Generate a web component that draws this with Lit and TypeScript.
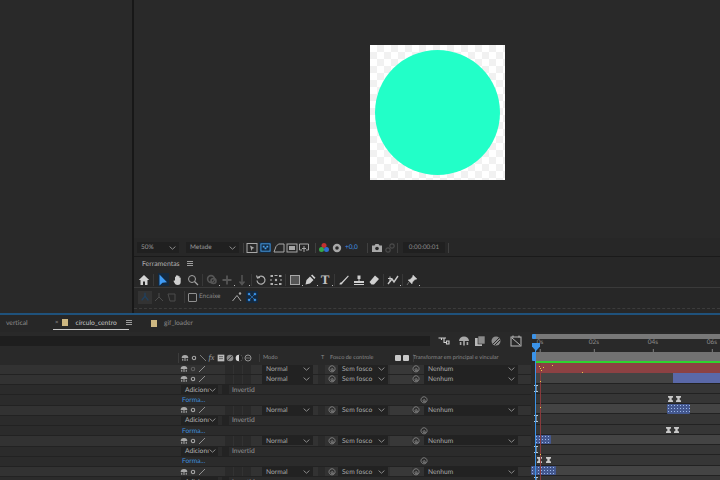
import { LitElement, html, css, svg } from "lit";
import { customElement } from "lit/decorators.js";

const ic = (content: unknown, w = 12, h = 12, cls = "") =>
  html`<svg class="ic ${cls}" width=${w} height=${h} viewBox="0 0 12 12">${content}</svg>`;

const solo = svg`<path d="M1 6a5 4.600 0 0 1 10 0zM5.200 6h1.600v4.500H5.200zM1.800 7h1.600v3H1.800zM8.600 7h1.600v3H8.600z" fill="currentColor"/>`;
const gear = svg`<circle cx="6" cy="6" r="3.400" fill="none" stroke="currentColor" stroke-width="2.200"/>`;
const slash = svg`<path d="M1.500 10.500 10.500 1.500" stroke="currentColor" stroke-width="1.200" fill="none"/>`;
const spiral = svg`<path d="M9.600 8.600A4.600 4.600 0 1 1 10.600 5.500c.2 2-1 3-2 3-1.300 0-1.100-1.300-1-2.600-.8-.7-3.200-.4-3.200 1.300 0 1.700 2.500 1.700 3.200.6" fill="none" stroke="currentColor" stroke-width="1"/>`;
const chevron = html`<svg class="chev" width="7" height="4" viewBox="0 0 7 4"><path d="M.6.6 3.500 3.200 6.400.6" fill="none" stroke="currentColor" stroke-width="1"/></svg>`;

type Row = { kind: "layer"; sw: number } | { kind: "add" } | { kind: "shape" };

const rows: Row[] = [
  { kind: "layer", sw: 0 },
  { kind: "layer", sw: 1 },
  { kind: "add" },
  { kind: "shape" },
  { kind: "layer", sw: 1 },
  { kind: "add" },
  { kind: "shape" },
  { kind: "layer", sw: 1 },
  { kind: "add" },
  { kind: "shape" },
  { kind: "layer", sw: 1 },
  { kind: "add" },
];

const RH = 10.25;
const clips = [
  { r: 0, l: 5, w: 184, c: "red" },
  { r: 1, l: 142, w: 47, c: "blue" },
  { r: 4, l: 136, w: 23, c: "clip" },
  { r: 7, l: 4, w: 16, c: "clip" },
  { r: 10, l: 0, w: 25, c: "clip" },
];
const markers = [
  { r: 3, l: 137 },
  { r: 3, l: 145 },
  { r: 6, l: 135 },
  { r: 6, l: 143 },
  { r: 9, l: 6 },
  { r: 9, l: 15 },
];
const bars = [2, 5, 8, 11];
const dots = [
  [8, 3], [9, 5], [12, 4], [21, 2], [9, 18], [51, 9], [9, 44], [10, 7], [9, 91],
];

const toolbar = [
  svg`<path d="M6 1 .8 6H2.500v5h2.500V7.500h2V11h2.500V6h1.700z" fill="#d4d4d4"/>`,
  "sep",
  "arrow",
  svg`<path d="M3 6V3.200c0-.9 1-.9 1 0V2c0-.9 1.200-.9 1.200 0v-.2c0-.8 1.200-.8 1.200 0V2.600c0-.8 1.200-.8 1.200 0V4c0-.7 1.100-.7 1.100 0v4c0 2-1 3-3 3-2.200 0-2.800-1-4-3.500-.4-.8.500-1.300 1-.7z" fill="#cfcfcf"/>`,
  svg`<circle cx="5" cy="5" r="3.500" fill="none" stroke="#a4a4a4"/><path d="M7.500 7.500 11 11" stroke="#a4a4a4" stroke-width="1.200"/>`,
  "sep",
  svg`<circle cx="5" cy="5" r="3.400" fill="none" stroke="#565656" stroke-width="1.600"/><circle cx="7.500" cy="7" r="2.500" fill="none" stroke="#565656" stroke-width="1.600"/>`,
  svg`<path d="M6 1.500v9M1.500 6h9" stroke="#565656" stroke-width="1.800"/>`,
  svg`<path d="M6 1v9M3.500 7.500 6 10.500 8.500 7.500" stroke="#565656" fill="none" stroke-width="1.500"/>`,
  "sep",
  svg`<path d="M3 3.500A4 4 0 1 1 2 6.500M1.500 1.500l1 2.500 2.500-.5" fill="none" stroke="#b0b0b0" stroke-width="1.200"/>`,
  svg`<path d="M.5 1h2.500v2H.5zM4.500 1h3v1h-3zM9 1h2.500v2H9zM.5 5h1v2h-1zM10.500 5h1v2h-1zM.5 9h2.500v2H.5zM4.500 10h3v1h-3zM9 9h2.500v2H9z" fill="#b0b0b0"/><circle cx="6" cy="6" r="1.200" fill="#b0b0b0"/>`,
  "sep",
  svg`<rect x="1.500" y="1.500" width="9" height="9" fill="#555" stroke="#a8a8a8"/>`,
  svg`<path d="M1.500 10.500 2.500 6l3.500-3.500 3.500 3.500L6 9.500zM7 1.500 8.200.5l3.300 3.300-1.200 1.200z" fill="#cfcfcf"/>`,
  "T",
  "sep",
  svg`<path d="M1.500 10.500c0-1.500 1-2.200 2-2.200L10 1.500l.8.800-6.300 7c0 1-1.500 1.500-3 1.200z" fill="#d0d0d0"/>`,
  svg`<path d="M4.500 1.500h3v3.500h-1V7H11v2H1V7h4.500V5h-1zM1 10h10v1H1z" fill="#cfcfcf"/>`,
  svg`<path d="M7 1.500 11 5 6 10.500H3.500L1.500 8z" fill="#d0d0d0"/>`,
  "sep",
  svg`<path d="M1 10 5 5 7 8l4-6" fill="none" stroke="#c8c8c8" stroke-width="1.400"/><path d="M3 2.500v5M1 4.500h4" stroke="#c8c8c8"/>`,
  "sep",
  svg`<path d="M7 1l4 4-2 .5-2.500 2.500L6 10 2 6l2-.5L6.500 3zM3 8l-2 3" fill="#cfcfcf" stroke="#cfcfcf" stroke-width=".4"/>`,
];
const fly = new Set([6, 7, 8, 13, 14, 15, 21, 23]);

@customElement("app-root")
export class AppRoot extends LitElement {
  static styles = css`
    :host {
      display: block;
      width: 720px;
      height: 480px;
      overflow: hidden;
      background: #292929;
      color: #a8a8a8;
      font-family: Lato, "Noto Sans", sans-serif;
      font-size: 6.700px;
      line-height: 10px;
      text-rendering: geometricPrecision;
    }
    .ic { display: block; flex: none; color: #a8a8a8; }
    .chev { color: #8b8b8b; flex: none; }
    .upper { height: 313px; display: flex; }
    .left { width: 132px; flex: none; background: #292929; border-right: 2px solid #171717; }
    .right { width: 586px; display: flex; flex-direction: column; }
    .viewer { height: 238px; flex: none; background: #292929; padding: 45px 0 0 236px; box-sizing: border-box; }
    .comp {
      width: 135px; height: 135px;
      background-color: #fff;
      background-image: conic-gradient(#f1f1f1 25%, #fff 0 50%, #f1f1f1 0 75%, #fff 0);
      background-size: 14px 14px;
      display: flex; align-items: center; justify-content: center;
    }
    .circle { width: 125px; height: 125px; border-radius: 50%; background: #22ffc8; }

    .vbar { height: 19px; flex: none; display: flex; align-items: center; padding: 1px 0 0 3px; border-bottom: 1px solid #1a1a1a; box-sizing: border-box; background: #272727; }
    .vsel { height: 11px; background: #202020; display: flex; align-items: center; justify-content: space-between; box-sizing: border-box; padding: 0 3px 0 4px; color: #9a9a9a; flex: none; font-size: 6.400px; }
    .s50 { width: 42px; }
    .smet { width: 53px; margin-left: 7px; }
    .sep { width: 1px; height: 10px; background: #404040; flex: none; }
    .ml1 { margin-left: 1px; } .ml2 { margin-left: 2px; } .ml3 { margin-left: 3px; }
    .ml4 { margin-left: 4px; } .ml5 { margin-left: 5px; } .ml9 { margin-left: 9px; }
    .hl { background: #14293f; width: 12px; height: 11px; display: flex; align-items: center; justify-content: center; flex: none; }
    .plus { color: #3f8fe0; width: 13px; flex: none; font-size: 6.500px; }
    .timebox { background: #202020; height: 11px; width: 42px; display: flex; align-items: center; justify-content: center; color: #8a8a8a; flex: none; font-size: 6.300px; }

    .tools { flex: 1; display: flex; flex-direction: column; background: #272727; }
    .tools-title { height: 13px; display: flex; align-items: center; padding-left: 8px; color: #b0b0b0; font-size: 6.900px; flex: none; }
    .burger { width: 6px; height: 5px; border-top: 1px solid #9c9c9c; border-bottom: 1px solid #9c9c9c; position: relative; flex: none; box-sizing: border-box; }
    .burger::after { content: ""; position: absolute; left: 0; right: 0; top: 1px; height: 1px; background: #9c9c9c; }
    .tools-title .burger { margin-left: 7px; }
    .tool-row { display: flex; align-items: center; height: 18px; padding-left: 2.500px; flex: none; box-sizing: border-box; }
    .tool-row.first { border-bottom: 1px solid #3a3a3a; padding-top: 2px; }
    .slot { width: 15px; height: 13px; display: flex; align-items: center; justify-content: center; flex: none; position: relative; }
    .slot.f::after { content: ""; position: absolute; right: 0; bottom: 0; width: 1px; height: 1px; background: #bdbdbd; }
    .slot.on { background: #14293f; width: 11px; margin: 0 2px; }
    .t-glyph { font: 600 13px/13px "Liberation Serif", serif; color: #c2c2c2; }
    .t-sep { width: 1px; height: 12px; background: #383838; flex: none; margin: 0 1.500px; }
    .snap-off { background: #333; width: 14px; height: 13px; display: flex; align-items: center; justify-content: center; flex: none; margin-left: -1px; }
    .r2-a { margin-left: 1px; }
    .r2-sep { margin-left: 6px; }
    .check { width: 7px; height: 7px; border: 1px solid #909090; border-radius: 1px; flex: none; margin-left: 2px; }
    .encaixe { color: #8a8a8a; width: 27px; margin-left: 2px; flex: none; font-size: 6.400px; }
    .r2-b { margin-left: 5px; }
    .snap { background: #14293f; width: 12px; height: 12px; display: flex; align-items: center; justify-content: center; flex: none; margin-left: 3px; }
    .dash { margin-top: 2px; border-top: 1px dashed #3c3c3c; }

    .blue-line { height: 2px; background: #1f527c; }
    .tabs { height: 17px; display: flex; align-items: flex-start; background: #272727; color: #8f8f8f; box-sizing: border-box; }
    .tab { display: flex; align-items: center; height: 14px; margin-top: 1px; box-sizing: border-box; flex: none; }
    .t-vert { padding-left: 6px; width: 53px; }
    .t-act { width: 76px; color: #c4c4c4; border-bottom: 1px solid #c8c8c8; padding-left: 2px; }
    .t-act .swatch { margin-left: 4px; margin-right: 7px; }
    .t-act .burger { margin-left: 9px; }
    .t-gif { margin-left: 22px; color: #8a8a8a; }
    .t-gif .swatch { margin-right: 7px; }
    .swatch { width: 6px; height: 7px; background: #cdb781; flex: none; }
    .x { font-size: 6px; color: #999; }

    .timeline { height: 148px; display: grid; grid-template-columns: 531px 189px; background: #292929; }
    .pane { display: flex; flex-direction: column; min-width: 0; }
    .top-ctl { height: 20px; flex: none; display: flex; background: #292929; padding-top: 4px; box-sizing: border-box; }
    .search { width: 430px; height: 10px; background: #1e1e1e; flex: none; }
    .ctl { width: 12px; height: 12px; flex: none; margin-left: 4px; margin-top: -1px; }
    .ctl.wide { margin-left: 8px; }
    .head { height: 12.500px; padding-bottom: 1.500px; box-sizing: border-box; flex: none; display: flex; align-items: center; color: #8a8a8a; font-size: 5.600px; }
    .sw-icons { display: flex; align-items: center; flex: none; margin-left: 178px; width: 81px; border-left: 1px solid #3c3c3c; padding-left: 1px; box-sizing: border-box; }
    .sw { width: 9px; display: flex; justify-content: center; flex: none; }
    .fx { font: italic 8px/10px "Liberation Serif", serif; color: #a0a0a0; }
    .h-bar { width: 1px; height: 8px; background: #3c3c3c; flex: none; }
    .h-mode { margin-left: 3px; width: 58px; flex: none; }
    .h-t { width: 9px; flex: none; }
    .h-foc { width: 65px; flex: none; }
    .tiny { width: 6px; height: 6px; background: #c8c8c8; flex: none; border-radius: 1px; margin-right: 2px; }
    .h-bar2 { width: 1px; height: 8px; background: #3c3c3c; margin: 0 2px; flex: none; }
    .h-tr { flex: none; white-space: nowrap; margin-left: -3px; }

    .row { height: 10.250px; flex: none; display: flex; align-items: center; box-sizing: border-box; border-bottom: 1px solid #222; background: #2b2b2b; white-space: nowrap; }
    .row.layer { background: #323232; }
    .switches { margin-left: 180px; display: flex; width: 82px; flex: none; height: 100%; align-items: center; }
    .sw-gear { margin-left: 2px; }
    .sw-slash { margin-left: 2px; }
    .sw-gear.off { color: #5e5e5e; }
    .blank { width: 8px; height: 100%; background: #2a2a2a; margin-right: 1px; flex: none; }
    .blank.first { margin-left: 19px; }
    .sel { display: flex; align-items: center; justify-content: space-between; box-sizing: border-box; padding: 0 3px 0 4px; height: 9px; background: #222; color: #a8a8a8; flex: none; }
    .mode { width: 51px; }
    .cell { width: 7px; height: 100%; background: #2a2a2a; margin-left: 5px; flex: none; }
    .sp-cell { width: 8px; margin-left: 3px; flex: none; }
    .sp-cell .ic, .orb { color: #a0a0a0; }
    .foco { width: 50px; margin-left: 2px; }
    .hatch { width: 22px; height: 100%; margin-left: 2px; flex: none; background: #383838; }
    .sp2 { flex: none; }
    .parent { width: 94px; margin-left: 4px; }
    .add-sel { margin-left: 181px; width: 37px; background: #222; color: #b4b4b4; padding: 0 2px 0 4px; overflow: hidden; }
    .inv-box { width: 7px; height: 9px; background: #232323; margin: 0 3px 0 4px; flex: none; }
    .inv { color: #969696; flex: none; }
    .forma { margin-left: 182px; color: #3d8fdf; width: 238px; flex: none; }
    .orb { flex: none; }
    .tl-right { position: relative; overflow: hidden; }
    .nav { height: 5px; margin: 2px 0 0 4px; flex: none; background: #787878; }
    .ruler { height: 13px; flex: none; position: relative; color: #8b8b8b; font-size: 6.500px; }
    .tk { position: absolute; top: -1px; transform: translateX(-50%); }
    .tk::after { content: ""; position: absolute; left: 50%; top: 11px; width: 1px; height: 3px; background: #808080; }
    .work { height: 9px; margin-left: 4px; background: #727272; flex: none; }
    .green { height: 2px; flex: none; background: #2fd32f; margin-left: 5px; }
    .tracks { flex: 1; position: relative; min-height: 0; background: #2b2b2b; }
    .trk { height: 10.250px; box-sizing: border-box; border-bottom: 1px solid #222; background: #363636; margin-left: 5px; }
    .trk.lay { background: #444; }
    .c { position: absolute; height: 9.500px; }
    .red { background: #8c4143; }
    .blue { background: #5a68a8; }
    .clip { background-color: #44588f; background-image: radial-gradient(#9db8ea .6px, transparent .8px); background-size: 3px 3px; border-radius: 1px; }
    .mk { position: absolute; width: 5px; height: 6px; color: #c8c8c8; }
    .bar { position: absolute; width: 4px; height: 7px; left: 3px; color: #b4cad8; }
    .dot { position: absolute; width: 1px; height: 1px; background: #ecc84a; }
    .ph { position: absolute; top: -20px; bottom: 0; left: 4px; width: 1px; background: #3b93e8; }
    .ph2 { position: absolute; top: 0; bottom: 0; left: 8.500px; width: 1.500px; background: #8a3a3c; }
    .nub { position: absolute; left: 1px; width: 4px; background: #3b93e8; border-radius: 1px; }
    .nub.a { top: 2px; height: 5px; }
    .nub.b { top: 20px; height: 9px; }
    .head-m { position: absolute; left: 1px; top: 11px; }
  `;

  private renderRow(r: Row) {
    if (r.kind === "layer") {
      return html`<div class="row layer">
        <div class="switches">
          ${ic(solo, 8, 8)}
          ${ic(gear, 6, 6, r.sw ? "sw-gear" : "sw-gear off")}
          ${ic(slash, 8, 8, "sw-slash")}
          <span class="blank first"></span><span class="blank"></span><span class="blank"></span>
        </div>
        <div class="sel mode">Normal ${chevron}</div>
        <div class="cell"></div>
        <div class="sp-cell">${ic(spiral, 8, 8)}</div>
        <div class="sel foco">Sem fosco ${chevron}</div>
        <div class="hatch"></div>
        ${ic(spiral, 8, 8, "orb sp2")}
        <div class="sel parent">Nenhum ${chevron}</div>
      </div>`;
    }
    if (r.kind === "add") {
      return html`<div class="row">
        <div class="sel add-sel">Adicionı ${chevron}</div>
        <div class="inv-box"></div>
        <div class="inv">Invertid</div>
      </div>`;
    }
    return html`<div class="row">
      <div class="forma">Forma...</div>
      ${ic(spiral, 8, 8, "orb")}
    </div>`;
  }

  private renderTool(t: unknown, i: number) {
    if (t === "sep") return html`<span class="t-sep"></span>`;
    if (t === "arrow")
      return html`<span class="slot on">${ic(svg`<path d="M2.500 .5v11l3-2.800 4.500-.4z" fill="#3f9bf5"/>`)}</span>`;
    const f = fly.has(i) ? "slot f" : "slot";
    if (t === "T") return html`<span class="${f}"><span class="t-glyph">T</span></span>`;
    return html`<span class="${f}">${ic(t)}</span>`;
  }

  render() {
    return html`
      <div class="upper">
        <div class="left"></div>
        <div class="right">
          <div class="viewer"><div class="comp"><div class="circle"></div></div></div>
          <div class="vbar">
            <div class="vsel s50">50% ${chevron}</div>
            <div class="vsel smet">Metade ${chevron}</div>
            <span class="sep ml4"></span>
            ${ic(svg`<rect x="1" y="1.500" width="10" height="9" fill="none" stroke="currentColor"/><path d="M4 3.500l4.500 2.500-2 .5-1 2.500z" fill="currentColor"/>`, 12, 12, "ml2")}
            <span class="hl ml1">${ic(svg`<rect x="1" y="2" width="10" height="8" fill="none" stroke="#4aa3ee"/><path d="M3 4h2v2H3zM7 4h2v2H7zM5 6h2v2H5z" fill="#4aa3ee"/>`, 11, 11)}</span>
            ${ic(svg`<path d="M1 10h10V2H5.500L3 4.500 1 10z" fill="none" stroke="currentColor"/>`, 12, 12, "ml2")}
            ${ic(svg`<rect x="1" y="2" width="10" height="8" fill="none" stroke="currentColor"/><rect x="3" y="4" width="6" height="4" fill="currentColor"/>`, 12, 12, "ml1")}
            ${ic(svg`<path d="M4 8H1.500V2h9v6H8M6 4v6M4 6.500h4" fill="none" stroke="currentColor"/>`)}
            <span class="sep ml5"></span>
            ${ic(svg`<circle cx="6" cy="3.500" r="2.500" fill="#c23030"/><circle cx="3.500" cy="7.500" r="2.500" fill="#35a84a"/><circle cx="8.500" cy="7.500" r="2.500" fill="#2f6fd0"/>`, 12, 12, "ml2")}
            ${ic(svg`<circle cx="6" cy="6" r="3" fill="none" stroke="currentColor" stroke-width="2.400"/>`, 12, 12, "ml1")}
            <span class="plus ml2">+0,0</span>
            <span class="sep ml9"></span>
            ${ic(svg`<path d="M1 3.500h2.500l1-1.500h3l1 1.500H11v6.500H1z" fill="currentColor"/><circle cx="6" cy="6.500" r="1.800" fill="#272727"/>`, 12, 12, "ml3")}
            ${ic(svg`<circle cx="4" cy="8" r="2.200" fill="none" stroke="#4a4a4a" stroke-width="1.200"/><circle cx="8" cy="4" r="2.200" fill="none" stroke="#4a4a4a" stroke-width="1.200"/>`, 12, 12, "ml1")}
            <span class="sep ml1"></span>
            <div class="timebox ml5">0:00:00:01</div>
            <span class="sep ml3"></span>
          </div>
          <div class="tools">
            <div class="tools-title">Ferramentas<span class="burger"></span></div>
            <div class="tool-row first">${toolbar.map((t, i) => this.renderTool(t, i))}</div>
            <div class="tool-row">
              <span class="snap-off r2-a">${ic(svg`<path d="M6 1v4L2 10M6 5l4 5" stroke="#1f4160" stroke-width="1.500" fill="none"/>`, 10, 10)}</span>
              ${ic(svg`<path d="M6 2v4L2 10M6 6l4 4" stroke="#4c4c4c" fill="none"/>`, 12, 12, "ml1")}
              ${ic(svg`<path d="M2 3h7v7H4z" stroke="#4c4c4c" fill="none"/>`, 12, 12, "ml1")}
              <span class="t-sep r2-sep"></span>
              <span class="check"></span>
              <span class="encaixe">Encaixe</span>
              ${ic(svg`<path d="M1.500 10 6 4.500l4 5.500" fill="none" stroke="#a8a8a8"/><circle cx="9" cy="2.500" r="1.200" fill="#a8a8a8"/>`, 12, 12, "r2-b")}
              <span class="snap">${ic(svg`<path d="M1.500 1.500h2v2h-2zM8.500 1.500h2v2h-2zM1.500 8.500h2v2h-2zM8.500 8.500h2v2h-2zM3.500 3.500l5 5M8.500 3.500l-5 5" fill="#3f9bf5" stroke="#3f9bf5" stroke-width=".6"/>`, 10, 10)}</span>
            </div>
            <div class="dash"></div>
          </div>
        </div>
      </div>
      <div class="blue-line"></div>
      <div class="tabs">
        <div class="tab t-vert">vertical</div>
        <div class="tab t-act">
          <span class="x">×</span><span class="swatch"></span><span>círculo_centro</span><span class="burger"></span>
        </div>
        <div class="tab t-gif"><span class="swatch"></span><span>gif_loader</span></div>
      </div>
      <div class="timeline">
        <div class="pane">
          <div class="top-ctl">
            <div class="search"></div>
            <span class="ctl wide">${ic(svg`<path d="M.5 3h7.500M6 3v4.500h2.500M8.500 6h2.500v3H8.500zM3.500 3v2" stroke="#d0d0d0" fill="none" stroke-width="1.100"/>`)}</span>
            <span class="ctl wide">${ic(solo)}</span>
            <span class="ctl">${ic(svg`<rect x="1" y="3" width="7" height="8" fill="#b8b8b8"/><rect x="4" y="1" width="7" height="8" fill="#8a8a8a" stroke="#292929" stroke-width=".6"/>`)}</span>
            <span class="ctl">${ic(svg`<circle cx="6" cy="6" r="4.500" fill="#8c8c8c"/><path d="M3 9 9 3M5 10l5-5" stroke="#292929"/>`)}</span>
            <span class="ctl wide">${ic(svg`<rect x="1" y="2" width="10" height="9" fill="none" stroke="#b8b8b8"/><path d="M2 3 10 10M3 .5v2M9 .5v2" stroke="#b8b8b8"/>`)}</span>
          </div>
          <div class="head">
            <div class="sw-icons">
              <span class="sw">${ic(solo, 8, 8)}</span>
              <span class="sw">${ic(gear, 6, 6)}</span>
              <span class="sw">${ic(svg`<path d="M1.500 1.500 10.500 10.500" stroke="#999" stroke-width="1.100"/>`, 8, 8)}</span>
              <span class="sw fx">fx</span>
              <span class="sw">${ic(svg`<rect x="1" y="1" width="10" height="10" fill="#bcbcbc"/><path d="M3 4h6M3 7h6" stroke="#333"/>`, 8, 8)}</span>
              <span class="sw">${ic(svg`<circle cx="6" cy="6" r="5" fill="#8a8a8a"/><path d="M3 9 9 3" stroke="#222"/>`, 8, 8)}</span>
              <span class="sw">${ic(svg`<circle cx="6" cy="6" r="5" fill="#d4d4d4"/><path d="M6 1a5 5 0 0 1 0 10z" fill="#222"/>`, 8, 8)}</span>
              <span class="sw">${ic(svg`<circle cx="6" cy="6" r="4.500" fill="none" stroke="#999" stroke-width="1.400"/><path d="M3 6h6" stroke="#999"/>`, 8, 8)}</span>
            </div>
            <span class="h-bar"></span>
            <div class="h-mode">Modo</div>
            <div class="h-t">T</div>
            <div class="h-foc">Fosco de controle</div>
            <span class="tiny"></span><span class="tiny"></span>
            <span class="h-bar2"></span>
            <span class="h-tr">Transformar em principal e vincular</span>
          </div>
          ${rows.map((r) => this.renderRow(r))}
        </div>
        <div class="pane tl-right">
          <div class="nav"></div>
          <div class="ruler">
            <span class="tk" style="left:9px">0s</span>
            <span class="tk" style="left:63px">02s</span>
            <span class="tk" style="left:122px">04s</span>
            <span class="tk" style="left:181px">06s</span>
          </div>
          <div class="work"></div>
          <div class="green"></div>
          <div class="tracks">
            ${rows.map((r) => html`<div class="trk ${r.kind === "layer" ? "lay" : ""}"></div>`)}
            ${clips.map((c) => html`<div class="c ${c.c}" style="top:${c.r * RH}px;left:${c.l}px;width:${c.w}px"></div>`)}
            ${markers.map((m) => html`<svg class="mk" viewBox="0 0 5 6" style="top:${m.r * RH + 2}px;left:${m.l}px"><path d="M0 0h5v1.200L3.200 3 5 4.800V6H0V4.800L1.800 3 0 1.200z" fill="currentColor"/></svg>`)}
            ${bars.map((b) => html`<svg class="bar" viewBox="0 0 4 7" style="top:${b * RH + 1}px"><path d="M0 .5h4M2 .5v6M0 6.500h4" stroke="currentColor" fill="none"/></svg>`)}
            <div class="ph2"></div>
            <div class="ph"></div>
            ${dots.map((d) => html`<span class="dot" style="left:${d[0]}px;top:${d[1]}px"></span>`)}
          </div>
          <div class="nub a"></div>
          <div class="nub b"></div>
          <svg class="head-m" width="8" height="8" viewBox="0 0 8 8"><path d="M0 0h8v3.500L4 8 0 3.500z" fill="#3b93e8"/></svg>
        </div>
      </div>
    `;
  }
}
